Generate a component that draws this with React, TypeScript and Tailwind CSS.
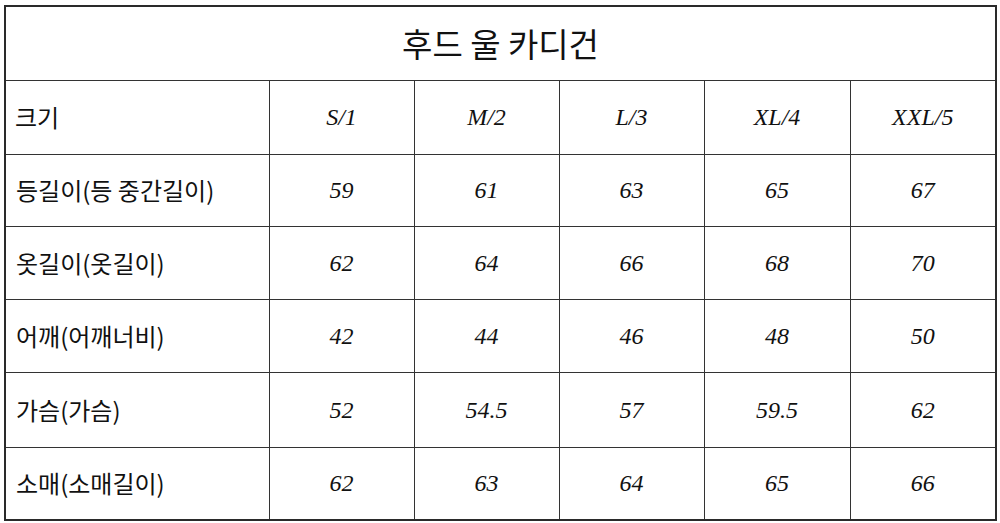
const heads = ["S/1", "M/2", "L/3", "XL/4", "XXL/5"];

const rows = [
  { label: "등길이(등 중간길이)", vals: ["59", "61", "63", "65", "67"], h: "h-[72px]" },
  { label: "옷길이(옷길이)", vals: ["62", "64", "66", "68", "70"], h: "h-[73px]" },
  { label: "어깨(어깨너비)", vals: ["42", "44", "46", "48", "50"], h: "h-[73px]" },
  { label: "가슴(가슴)", vals: ["52", "54.5", "57", "59.5", "62"], h: "h-[75px]" },
  { label: "소매(소매길이)", vals: ["62", "63", "64", "65", "66"], h: "h-[73px]" },
];

const kr = "font-['Noto_Sans_CJK_KR','Noto_Sans',sans-serif]";
const num = "font-['Liberation_Serif',serif] italic text-[24px] text-[#111] text-center";

const App = () => {
  return (
    <div className="w-[1000px] h-[523px] bg-white pt-[5px] pl-[4px]">
      <table className="w-[991px] table-fixed border-collapse border-2 border-[#2a2a2a]">
        <colgroup>
          <col className="w-[264px]" />
          <col className="w-[145px]" />
          <col className="w-[145px]" />
          <col className="w-[145px]" />
          <col className="w-[146px]" />
          <col className="w-[146px]" />
        </colgroup>
        <tbody>
          <tr className="h-[74px]">
            <td colSpan={6} className={`border border-[#333] text-center text-[33px] text-[#111] ${kr}`}>
              후드 울 카디건
            </td>
          </tr>
          <tr className="h-[74px]">
            <td className={`border border-[#333] pl-[9px] text-[24px] text-[#111] ${kr}`}>크기</td>
            {heads.map((h) => (
              <td key={h} className={`border border-[#333] ${num}`}>
                {h}
              </td>
            ))}
          </tr>
          {rows.map((r) => (
            <tr key={r.label} className={r.h}>
              <td className={`border border-[#333] pl-[10px] text-[24px] text-[#111] ${kr}`}>{r.label}</td>
              {r.vals.map((v, i) => (
                <td key={i} className={`border border-[#333] ${num}`}>
                  {v}
                </td>
              ))}
            </tr>
          ))}
        </tbody>
      </table>
    </div>
  );
};

export default App;
